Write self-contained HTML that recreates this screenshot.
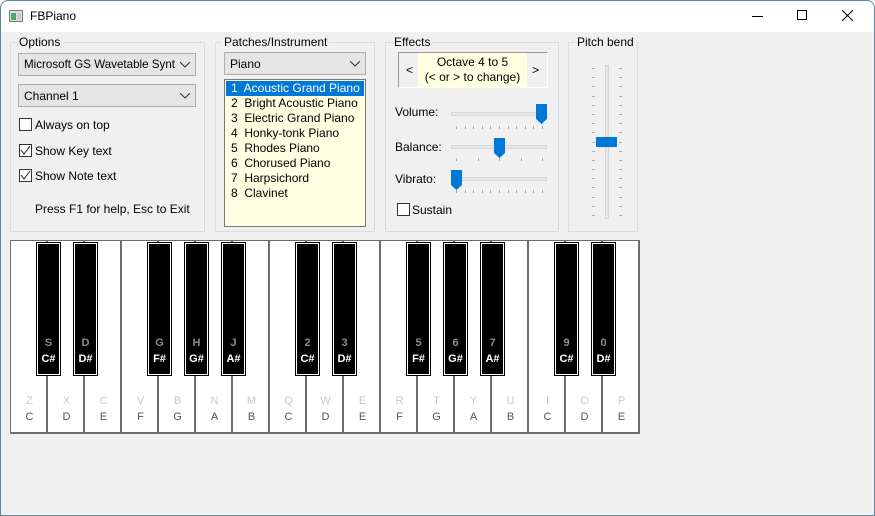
<!DOCTYPE html>
<html><head><meta charset="utf-8"><style>
*{box-sizing:border-box;margin:0;padding:0}
body{width:875px;height:516px;overflow:hidden;background:#fff;font-family:"Liberation Sans",sans-serif;font-size:12px;color:#000;position:relative}
#win{position:absolute;left:0;top:0;width:875px;height:516px;background:#f0f0f0;overflow:hidden}
#frame{position:absolute;left:0;top:0;width:875px;height:516px;border:1px solid #5a8a9a;border-radius:8px 8px 0 0;pointer-events:none}
#title{position:absolute;left:0;top:0;width:875px;height:32px;background:#fff}
.a{position:absolute}
.grp{position:absolute;border:1px solid #dcdcdc;}
.gl{position:absolute;top:-8px;left:6px;background:#f0f0f0;padding:0 2px;font-size:12px}
.combo{position:absolute;background:#e5e5e5;border:1px solid #adadad;padding:4px 0 0 5px;font-size:12px;white-space:nowrap;overflow:hidden}
.combo svg{position:absolute;right:5px;top:8px}
.cb{position:absolute;width:13px;height:13px;border:1px solid #333;background:#fff}
.lst{position:absolute;background:#ffffe1;border:1px solid #7a7a7a}
.lst div{height:15px;line-height:15px;padding-left:5px}
.tick{position:absolute;width:1px;height:3px;background:#aaa}
.wk{position:absolute;top:241px;height:191px;background:#fff;border-right:2px solid #6d6d6d}
.bk{position:absolute;top:242px;width:25px;height:134px;background:#000;border:1px solid #000;box-shadow:inset 0 0 0 1px #fff, inset 0 0 0 2px #000}
.lt{position:absolute;width:37px;text-align:center;font-size:11px}
</style></head><body>
<div id="win">
<div id="title">
<svg class="a" style="left:9px;top:10px" width="14" height="12"><rect x="0.5" y="0.5" width="13" height="11" fill="#ddd" stroke="#777"/><rect x="2" y="3" width="5" height="7" fill="#4a6"/><rect x="8" y="3" width="4" height="7" fill="#ccc"/></svg>
<div class="a" style="left:30px;top:9px;font-size:12px">FBPiano</div>
<div class="a" style="left:752px;top:16px;width:11px;height:1px;background:#000"></div>
<div class="a" style="left:797px;top:10px;width:10px;height:10px;border:1px solid #000"></div>
<svg class="a" style="left:842px;top:10px" width="11" height="11"><path d="M0 0L11 11M11 0L0 11" stroke="#000" stroke-width="1"/></svg>
</div>

<div class="grp" style="left:10px;top:42px;width:195px;height:190px"><span class="gl">Options</span></div>
<div class="combo" style="left:18px;top:53px;width:178px;height:23px;font-size:11.6px">Microsoft GS Wavetable Synt<svg width="10" height="6"><path d="M0 0L5 5L10 0" fill="none" stroke="#333"/></svg></div>
<div class="combo" style="left:18px;top:84px;width:178px;height:23px">Channel 1<svg width="10" height="6"><path d="M0 0L5 5L10 0" fill="none" stroke="#333"/></svg></div>
<div class="cb" style="left:19px;top:118px"></div><div class="a" style="left:35px;top:118px">Always on top</div>
<div class="cb" style="left:19px;top:144px"><svg width="11" height="11"><path d="M1 5L4 9L10 1" fill="none" stroke="#222"/></svg></div><div class="a" style="left:35px;top:144px">Show Key text</div>
<div class="cb" style="left:19px;top:169px"><svg width="11" height="11"><path d="M1 5L4 9L10 1" fill="none" stroke="#222"/></svg></div><div class="a" style="left:35px;top:169px">Show Note text</div>
<div class="a" style="left:35px;top:202px">Press F1 for help, Esc to Exit</div>

<div class="grp" style="left:215px;top:42px;width:160px;height:190px"><span class="gl">Patches/Instrument</span></div>
<div class="combo" style="left:224px;top:52px;width:142px;height:23px">Piano<svg width="10" height="6"><path d="M0 0L5 5L10 0" fill="none" stroke="#333"/></svg></div>
<div class="lst" style="left:224px;top:79px;width:142px;height:148px;padding:1px">
<div style="background:#0078d7;color:#fff">1&nbsp; Acoustic Grand Piano</div>
<div>2&nbsp; Bright Acoustic Piano</div><div>3&nbsp; Electric Grand Piano</div><div>4&nbsp; Honky-tonk Piano</div><div>5&nbsp; Rhodes Piano</div><div>6&nbsp; Chorused Piano</div><div>7&nbsp; Harpsichord</div><div>8&nbsp; Clavinet</div></div>

<div class="grp" style="left:385px;top:42px;width:174px;height:190px"><span class="gl">Effects</span></div>
<div class="a" style="left:398px;top:52px;width:150px;height:36px;border:1px solid #999;border-right-color:#fff;border-bottom-color:#fff;background:#f0f0f0"></div>
<div class="a" style="left:418px;top:53px;width:109px;height:34px;background:#ffffe1;text-align:center;line-height:15px;padding-top:2px">Octave 4 to 5<br>(&lt; or &gt; to change)</div>
<div class="a" style="left:406px;top:63px">&lt;</div><div class="a" style="left:532px;top:63px">&gt;</div>

<div class="a" style="left:395px;top:105px">Volume:</div>
<div class="a" style="left:395px;top:140px">Balance:</div>
<div class="a" style="left:395px;top:172px">Vibrato:</div>
<div class="a" style="left:451px;top:112px;width:96px;height:4px;background:#e7e7e7;border:1px solid #d6d6d6"></div>
<div class="a" style="left:451px;top:145px;width:96px;height:4px;background:#e7e7e7;border:1px solid #d6d6d6"></div>
<div class="a" style="left:451px;top:177px;width:96px;height:4px;background:#e7e7e7;border:1px solid #d6d6d6"></div>
<svg class="a" style="left:536px;top:104px" width="11" height="20"><path d="M0 0H11V15L5.5 20L0 15Z" fill="#0078d7"/></svg>
<svg class="a" style="left:494px;top:138px" width="11" height="20"><path d="M0 0H11V15L5.5 20L0 15Z" fill="#0078d7"/></svg>
<svg class="a" style="left:451px;top:170px" width="11" height="20"><path d="M0 0H11V15L5.5 20L0 15Z" fill="#0078d7"/></svg>
<div id="ticks"></div>
<div class="cb" style="left:397px;top:203px"></div><div class="a" style="left:412px;top:203px">Sustain</div>

<div class="grp" style="left:568px;top:42px;width:70px;height:190px"><span class="gl">Pitch bend</span></div>
<div class="a" style="left:605px;top:65px;width:4px;height:154px;background:#e7e7e7;border:1px solid #d6d6d6"></div>
<div class="a" style="left:596px;top:137px;width:21px;height:10px;background:#0078d7"></div>

<div class="a" style="left:10px;top:240px;width:630px;height:194px;border:1px solid #6d6d6d;border-right:none;background:#6d6d6d"></div>
<div id="kb"></div>
</div>
<div id="frame"></div>
<script>
var h='';
var wn=['C','D','E','F','G','A','B','C','D','E','F','G','A','B','C','D','E'];
var wl=['Z','X','C','V','B','N','M','Q','W','E','R','T','Y','U','I','O','P'];
for(var i=0;i<17;i++){var x=11+37*i;h+='<div class="wk" style="left:'+x+'px;width:37px"></div>';
h+='<div class="lt" style="left:'+x+'px;top:395px;color:#c8c8c8">'+wl[i]+'</div><div class="lt" style="left:'+x+'px;top:411px;color:#555">'+wn[i]+'</div>';}
var bl=[[1,'S','C#'],[2,'D','D#'],[4,'G','F#'],[5,'H','G#'],[6,'J','A#'],[8,'2','C#'],[9,'3','D#'],[11,'5','F#'],[12,'6','G#'],[13,'7','A#'],[15,'9','C#'],[16,'0','D#']];
bl.forEach(function(b){var x=11+37*b[0]-12;h+='<div class="bk" style="left:'+x+'px"></div><div class="lt" style="left:'+(x-6)+'px;top:337px;color:#8a8a8a;font-weight:bold">'+b[1]+'</div><div class="lt" style="left:'+(x-6)+'px;top:353px;color:#fff;font-weight:bold">'+b[2]+'</div>';});
document.getElementById('kb').innerHTML=h;
var t='';
[[126,10],[158,4],[190,10]].forEach(function(r){for(var k=0;k<=r[1];k++){t+='<div class="tick" style="left:'+Math.round(456+86*k/r[1])+'px;top:'+r[0]+'px"></div>';}});
for(var k=0;k<=16;k++){var y=Math.round(68+147*k/16);t+='<div class="tick" style="left:592px;top:'+y+'px;width:3px;height:1px"></div><div class="tick" style="left:619px;top:'+y+'px;width:3px;height:1px"></div>';}
document.getElementById('ticks').innerHTML=t;
</script>
</body></html>
